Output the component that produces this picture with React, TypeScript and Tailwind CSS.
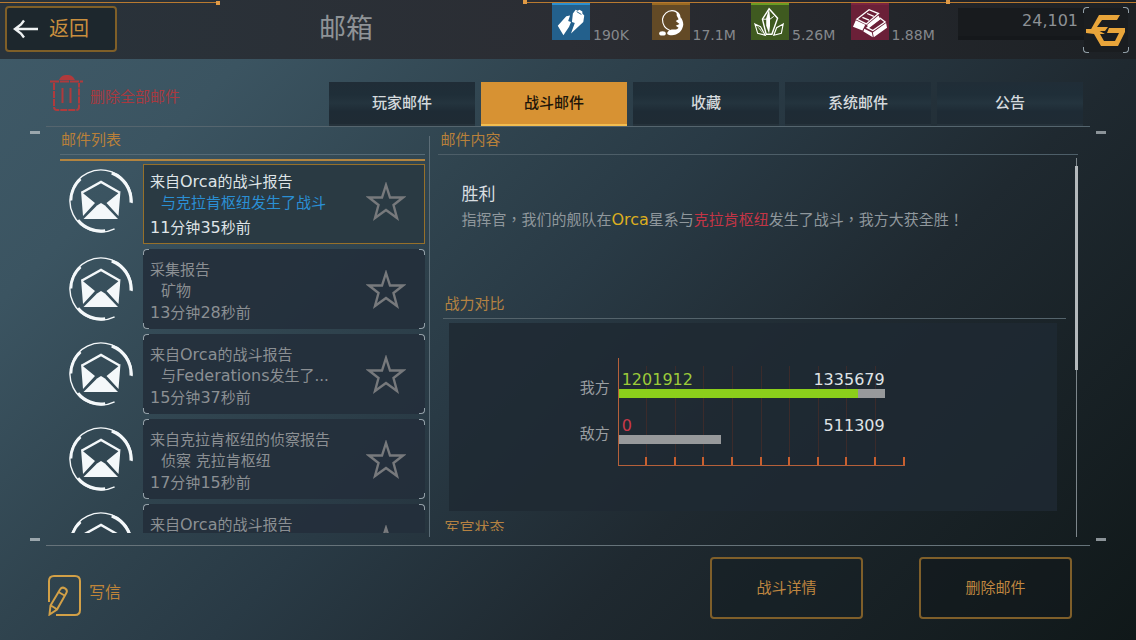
import { useState } from "react";
import type { ReactNode } from "react";
import clsx from "clsx";

interface Mail {
	id: number;
	title: string;
	subject?: string;
	time?: string;
}

interface Resource {
	name: string;
	amount: string;
	tile: string;
	icon: ReactNode;
}

const TABS = ["玩家邮件", "战斗邮件", "收藏", "系统邮件", "公告"];

const MAILS: Mail[] = [
	{ id: 1, title: "来自Orca的战斗报告", subject: "与克拉肯枢纽发生了战斗", time: "11分钟35秒前" },
	{ id: 2, title: "采集报告", subject: "矿物", time: "13分钟28秒前" },
	{ id: 3, title: "来自Orca的战斗报告", subject: "与Federations发生了...", time: "15分钟37秒前" },
	{ id: 4, title: "来自克拉肯枢纽的侦察报告", subject: "侦察 克拉肯枢纽", time: "17分钟15秒前" },
	{ id: 5, title: "来自Orca的战斗报告" },
];

const POWER = [
	{ side: "我方", left: 1201912, total: 1335679, color: "text-[#9ccb3a]" },
	{ side: "敌方", left: 0, total: 511309, color: "text-[#c8394a]" },
];
const MAX_POWER = 1335679;

const RESOURCES: Resource[] = [
	{
		name: "能量",
		amount: "190K",
		tile: "bg-[#23608c] border-[#2b8fd0]",
		icon: (
			<>
				<path d="M5 22 14 12l4-1-2 6 3 1-2 5-6 9z" />
				<path d="m21 9 3-4 2 1 2-1 3 2v2l2 2-1 7-13 12 4-11-3-1z" />
				<path d="m25 7 5 3" stroke="#23608c" strokeWidth="1" />
			</>
		),
	},
	{
		name: "矿物",
		amount: "17.1M",
		tile: "bg-[#634a26] border-[#9a6a22]",
		icon: (
			<>
				<path d="M18 27c-5-2-8-6-8-12 1-5 5-9 10-9 3 0 5 1 6 3" fill="none" stroke="#fff" strokeWidth="1.2" />
				<path d="M25 7c3 1 4 4 4 6 2 2 3 5 3 8-1 7-6 11-12 11-3 0-5-1-5-2 0-2 3-4 6-4 2 0 5 0 6-2l-3-2 4-2-4-3 3-2-2-4z" />
				<ellipse cx="10" cy="30" rx="3.5" ry="2.3" />
			</>
		),
	},
	{
		name: "晶体",
		amount: "5.26M",
		tile: "bg-[#3f5a20] border-[#6b9c22]",
		icon: (
			<>
				<path d="m18 4-7 11 4 16h6l6-17z" fill="none" stroke="#fff" strokeWidth="1.5" />
				<path d="m18 4-3 10v8l3 8 1-8V13z" />
				<path d="M11 15h8l4-3" fill="none" stroke="#fff" />
				<path d="m3 20 6 3 5 9-8-2zM33 20l-7 4-3 8 8-2z" fill="none" stroke="#fff" strokeWidth="1.2" />
				<path d="m4 21 5 5 3 5z" />
			</>
		),
	},
	{
		name: "合金",
		amount: "1.88M",
		tile: "bg-[#6b2038] border-[#7a2440]",
		icon: (
			<>
				{/* back bar */}
				<path d="M5 15 18 5l10 4-13 11z" fill="none" stroke="#fff" strokeWidth="1.4" />
				<path d="m4 16 10 5-3 6-10-4zM16 21 28 11l2 4-13 10z" />
				<path d="m11 13 7 3M16 9l7 3" stroke="#fff" strokeWidth="1.4" />
				{/* front bar */}
				<path d="m13 25 8 4 1 5-10-6zM22 29l14-10 1 5-14 10z" />
				<path d="m16 24 14-10 5 4-13 9z" fill="none" stroke="#fff" strokeWidth="1.4" />
			</>
		),
	},
];

// Latin letters and digits run a size larger than the Chinese text around them
function MixedText({ text }: { text: string }) {
	return (
		<>
			{text.split(/([A-Za-z0-9]+)/).map((part, i) =>
				i % 2 === 1 ? (
					<span key={i} className="text-base leading-none">
						{part}
					</span>
				) : (
					part
				)
			)}
		</>
	);
}

function MailIcon() {
	return (
		<svg viewBox="0 0 64 64" className="h-16 w-16 shrink-0" fill="none" stroke="#f4f8fa" aria-hidden="true">
			<circle cx="32" cy="32" r="31" strokeWidth="1.4" pathLength="360" strokeDasharray="300 60" transform="rotate(64 32 32)" />
			<circle cx="32" cy="32" r="30" strokeWidth="3" pathLength="360" strokeDasharray="72 288" transform="rotate(291 32 32)" />
			<circle cx="32" cy="32" r="30" strokeWidth="2.6" pathLength="360" strokeDasharray="46 314" transform="rotate(181 32 32)" />
			<circle cx="32" cy="32" r="30" strokeWidth="3" pathLength="360" strokeDasharray="58 302" transform="rotate(82 32 32)" />
			<path d="M13 23.500 32 13l18.500 10.500" strokeWidth="2.400" />
			<path d="m12 22 3 3 11 9-12 13zM51.500 22l-3 3-11 9 12 13z" fill="#f4f8fa" stroke="none" />
			<path d="M14.500 50 28 36.500l4-2.500 4 2.500L49 50z" fill="#f4f8fa" stroke="none" />
		</svg>
	);
}

function StarIcon() {
	return (
		<svg viewBox="0 0 40 40" className="h-10 w-10" fill="none" stroke="#77797c" strokeWidth="2.4" aria-hidden="true">
			<path d="m20 3 4 12.500h13L27.500 23l3.500 13L20 28 9 36l3.500-13L3 15.500h13z" />
		</svg>
	);
}

// Small bracket marks at the corners of a card
function Corners() {
	return (
		<>
			<i className="absolute -top-px -left-px h-1.5 w-1.5 rounded-tl border-t border-l border-[#93a0a8]" />
			<i className="absolute -top-px -right-px h-1.5 w-1.5 rounded-tr border-t border-r border-[#93a0a8]" />
			<i className="absolute -bottom-px -left-px h-1.5 w-1.5 rounded-bl border-b border-l border-[#93a0a8]" />
			<i className="absolute -right-px -bottom-px h-1.5 w-1.5 rounded-br border-r border-b border-[#93a0a8]" />
		</>
	);
}

function Header() {
	return (
		<header className="relative flex h-[59px] shrink-0 justify-between bg-linear-to-r from-[#29333b] via-[#2b2d33] to-[#1d2125]">
			{/* Trim lines */}
			<div className="absolute top-0.5 left-0 h-px w-[19%] bg-[#b97a30]">
				<i className="absolute -top-px -right-1 h-1 w-1 bg-[#e09a45]" />
			</div>
			<div className="absolute top-0.5 right-0 h-px w-[54%] bg-[#b97a30]">
				<i className="absolute -top-0.5 left-0 h-1 w-1 bg-[#e09a45]" />
				<i className="absolute -top-0.5 left-[69%] h-1 w-1 bg-[#e09a45]" />
			</div>

			<div className="flex items-start pt-1.5 pl-[5px]">
				<button type="button" className="flex h-[46px] w-28 items-center gap-2.5 rounded-sm border-2 border-[#7f5f28] bg-[#1d272d] pl-1.5 text-xl text-[#c98f3e]">
					<svg viewBox="0 0 26 20" className="h-5 w-[26px]" fill="none" stroke="#eef1f2" strokeWidth="2.4" aria-hidden="true">
						<path d="M25 10H2M11 1.500 8 5.500l-6 4.500 6 4.500 3 4" />
					</svg>
					返回
				</button>
				<h1 className="ml-[202px] text-[27px] leading-[46px] text-[#8f9397]">邮箱</h1>
			</div>

			<div className="flex items-start">
				<ul className="mt-[3px] grid w-[398px] grid-cols-4">
					{RESOURCES.map((r) => (
						<li key={r.name} className="flex items-end gap-[3px]">
							<svg
								viewBox="0 0 38 37"
								className={clsx("h-[37px] w-[38px] shrink-0 border-t-2", r.tile)}
								fill="#fff"
								role="img"
								aria-label={r.name}
							>
								{r.icon}
							</svg>
							<span className="text-sm leading-[9px] text-[#85888c]">{r.amount}</span>
						</li>
					))}
				</ul>
				<div className="mt-2 ml-2 h-8 w-[126px] border-b-4 border-[#15181b] bg-[#181b1e] pr-1.5 text-right text-base leading-[26px] text-[#8d9195]">
					24,101
				</div>
				<button type="button" aria-label="金币" className="relative mt-2 mr-2 h-11 w-11 bg-[#1a1d20]">
					<Corners />
					<svg viewBox="0 0 44 44" className="h-11 w-11" fill="#e9a53a" aria-hidden="true">
						<path d="M15 7h21l-3 5H18l-5 7h11l-3 4H6zM25 20h16v4l-7 14H17l-7-12-8-1v-4h10l9 5h-5l4 7h11l4-8H23z" />
					</svg>
				</button>
			</div>
		</header>
	);
}

function MailItem({ mail, active, onSelect }: { mail: Mail; active: boolean; onSelect: () => void }) {
	return (
		<li className="flex gap-2.5 pl-[9px]">
			<div className={active ? "pt-[5px]" : "pt-2"}>
				<MailIcon />
			</div>
			<div
				className={clsx(
					"relative flex h-20 min-w-0 flex-1 items-center border",
					active ? "border-[#96702a] bg-[#2a3a43]" : "rounded border-transparent bg-[#232f3b]/90"
				)}
			>
				{!active && <Corners />}
				<button
					type="button"
					onClick={onSelect}
					className={clsx(
						"flex h-full min-w-0 flex-1 flex-col items-start pl-1.5 text-[15px] leading-[21px] whitespace-nowrap",
						active ? "pt-[7px] text-[#dfe4e7]" : "pt-2.5 text-[#8b8f93]"
					)}
				>
					<span>
						<MixedText text={mail.title} />
					</span>
					{mail.subject && (
						<span className={clsx("pl-[11px]", active && "text-[#2a8fd4]")}>
							<MixedText text={mail.subject} />
						</span>
					)}
					{mail.time && (
						<span className={active ? "mt-1" : "mt-px"}>
							<MixedText text={mail.time} />
						</span>
					)}
				</button>
				<button type="button" aria-label="收藏邮件" className={clsx("absolute right-[18px]", active ? "top-[17px]" : "top-5")}>
					<StarIcon />
				</button>
			</div>
		</li>
	);
}

function SectionTitle({ children }: { children: ReactNode }) {
	return (
		<h3 className="mr-[9px] ml-[5px] border-b border-[#54636b] pl-px text-[15px] leading-7 text-[#b58242]">{children}</h3>
	);
}

function PowerChart() {
	return (
		<div className="mt-1 mr-[18px] ml-[11px] flex justify-center bg-[#1e2932]/85 pt-[35px] pr-[22px] pb-[45px]">
			<div className="grid grid-cols-[30px_287px] gap-2">
				<div className="flex flex-col gap-2.5 pt-3 text-[15px] leading-9 text-[#9a9ea1]">
					{POWER.map((p) => (
						<span key={p.side}>{p.side}</span>
					))}
				</div>
				<div className="relative h-[108px] border-b border-l border-[#b5603a]">
					{/* Grid and ticks */}
					<div className="absolute inset-0 top-2 flex">
						{Array.from({ length: 10 }, (_, i) => (
							<div key={i} className={clsx("flex flex-1 items-end justify-end border-r", i < 9 ? "border-[#3b2b2b]" : "border-transparent")}>
								<i className="-mr-px h-2 w-0.5 bg-[#c9602f]" />
							</div>
						))}
					</div>
					<div className="relative mr-5 flex flex-col gap-[18px] pt-3 text-base leading-[19px]">
						{POWER.map((p) => (
							<div key={p.side}>
								<div className="flex justify-between pl-[3px]">
									<span className={p.color}>{p.left}</span>
									<span className="text-[#dfe3e6]">{p.total}</span>
								</div>
								<div className="h-[9px] bg-[#97999b]" style={{ width: `${(p.total / MAX_POWER) * 100}%` }}>
									<div className="h-full bg-[#8bcf1b]" style={{ width: `${(p.left / p.total) * 100}%` }} />
								</div>
							</div>
						))}
					</div>
				</div>
			</div>
		</div>
	);
}

// Short dashes that stand outside the frame lines
function EdgeMarks({ className }: { className: string }) {
	return (
		<div className={clsx("pointer-events-none absolute -inset-x-4 flex justify-between", className)}>
			<i className="h-[3px] w-2.5 bg-[#9ba7ad]" />
			<i className="h-[3px] w-2.5 bg-[#8b9398]" />
		</div>
	);
}

export default function App() {
	const [tab, setTab] = useState(1);
	const [selected, setSelected] = useState(1);

	return (
		<div className="flex h-screen flex-col overflow-hidden bg-[linear-gradient(135deg,#3f5a68_0%,#3b5461_17%,#30444f_35%,#293a45_48%,#1f2930_67%,#101819_100%)] font-['DejaVu_Sans','Noto_Sans_CJK_SC',sans-serif]">
			<Header />

			{/* Toolbar */}
			<div className="mr-[53px] ml-[50px] flex h-[67px] shrink-0 items-end justify-between">
				<button type="button" className="mb-3.5 flex items-end gap-1.5 text-[15px] leading-[30px] text-[#a8393f]">
					<svg viewBox="0 0 34 38" className="h-[38px] w-[34px]" fill="none" stroke="#b03a3c" strokeWidth="2" aria-hidden="true">
						<path d="M0 7.500h33" strokeDasharray="9 1" />
						<path d="M9 6c2-4 4-5 8-5s6 1 8 5z" fill="#b03a3c" stroke="none" />
						<path d="M4 9v24q0 3 3 3h19q3 0 3-3V9" strokeDasharray="7 1" />
						<path d="M12.500 14v15M20.500 14v15" />
					</svg>
					删除全部邮件
				</button>
				<div role="tablist" className="grid w-[73%] grid-cols-5 gap-1.5">
					{TABS.map((label, i) => (
						<button
							key={label}
							type="button"
							role="tab"
							aria-selected={tab === i}
							onClick={() => setTab(i)}
							className={clsx(
								"h-11 border-b-2 text-[15px] font-medium",
								tab === i
									? "border-[#f3bd50] bg-[#d79233] text-[#1d1509]"
									: "border-[#25323b] bg-[linear-gradient(#202d37,#1f2e38_30%,#24343e_50%,#1e2b35_70%,#1f2b34)] text-[#d5dadd]"
							)}
						>
							{label}
						</button>
					))}
				</div>
			</div>

			<main className="relative mx-[46px] flex min-h-0 flex-1 border-t border-[#55656e]">
				<EdgeMarks className="top-1" />
				<EdgeMarks className="bottom-1" />

				{/* Mail list */}
				<section className="ml-3.5 flex w-[35%] min-w-0 shrink-0 flex-col">
					<h2 className="border-b border-[#566a75] pl-px text-[15px] leading-[27px] text-[#b9803a]">邮件列表</h2>
					<div className="mt-1 mb-[3px] h-0.5 shrink-0 bg-[#b28440]" />
					<ul className="mb-3 flex min-h-0 flex-1 flex-col gap-[5px] overflow-hidden">
						{MAILS.map((mail) => (
							<MailItem key={mail.id} mail={mail} active={mail.id === selected} onSelect={() => setSelected(mail.id)} />
						))}
					</ul>
				</section>

				<div className="mt-[9px] mr-2 mb-2 ml-1 w-px bg-[#5c6d77]" />

				{/* Mail content */}
				<section className="mr-3 flex min-w-0 flex-1 flex-col">
					<h2 className="border-b border-[#4d5e68] pl-0.5 text-[15px] leading-[27px] text-[#b9803a]">邮件内容</h2>
					<div className="flex min-h-0 flex-1">
						<div className="mb-3.5 min-w-0 flex-1 overflow-hidden">
							<article className="pt-[27px] pl-[23px]">
								<h3 className="text-[17px] leading-6 text-[#d8dde0]">胜利</h3>
								<p className="mt-px font-['DejaVu_Sans','Noto_Sans_CJK_TC',sans-serif] text-[15px] leading-[26px] text-[#8f979c]">
									指挥官，我们的舰队在
									<span className="text-base leading-none text-[#dcae1f]">Orca</span>星系与
									<span className="text-[#c33546]">克拉肯枢纽</span>发生了战斗，我方大获全胜！
								</p>
							</article>
							<div className="mt-[57px] flex flex-col gap-[3px]">
								<div>
									<SectionTitle>战力对比</SectionTitle>
									<PowerChart />
								</div>
								<SectionTitle>军官状态</SectionTitle>
							</div>
						</div>
						<div className="mt-[3px] mb-2 flex w-[3px] justify-center bg-[linear-gradient(#7d868b,#7d868b)] bg-size-[1px_100%] bg-center bg-no-repeat pt-2">
							<div className="h-[55%] w-[3px] bg-[#b4b9bc]" />
						</div>
					</div>
				</section>
			</main>

			<footer className="mx-[46px] flex h-[95px] shrink-0 items-start justify-between border-t border-[#66737a] pt-[11px] pr-[18px]">
				<button type="button" className="mt-[18px] ml-0.5 flex items-start gap-2 text-base leading-9 text-[#c08539]">
					<svg viewBox="0 0 33 41" className="h-[41px] w-[33px]" fill="none" stroke="#d2a047" strokeWidth="2" aria-hidden="true">
						<path d="M1 27V6q0-5 5-5h21q5 0 5 5v29q0 5-5 5H8" />
						<path d="m1.500 39.500 1-9 9.500-16q2-3 5-1.200t1.200 5L9 34.500zM10.500 17l6 3.500M3 30.500l5.500 3.500" />
					</svg>
					写信
				</button>
				<div className="flex gap-14 text-[15px] text-[#bf8640]">
					<button type="button" className="h-[62px] w-[153px] rounded-sm border-2 border-[#7f5f2a] bg-[#151f25]/60">
						战斗详情
					</button>
					<button type="button" className="h-[62px] w-[153px] rounded-sm border-2 border-[#7f5f2a] bg-[#12191c]/60">
						删除邮件
					</button>
				</div>
			</footer>
		</div>
	);
}
